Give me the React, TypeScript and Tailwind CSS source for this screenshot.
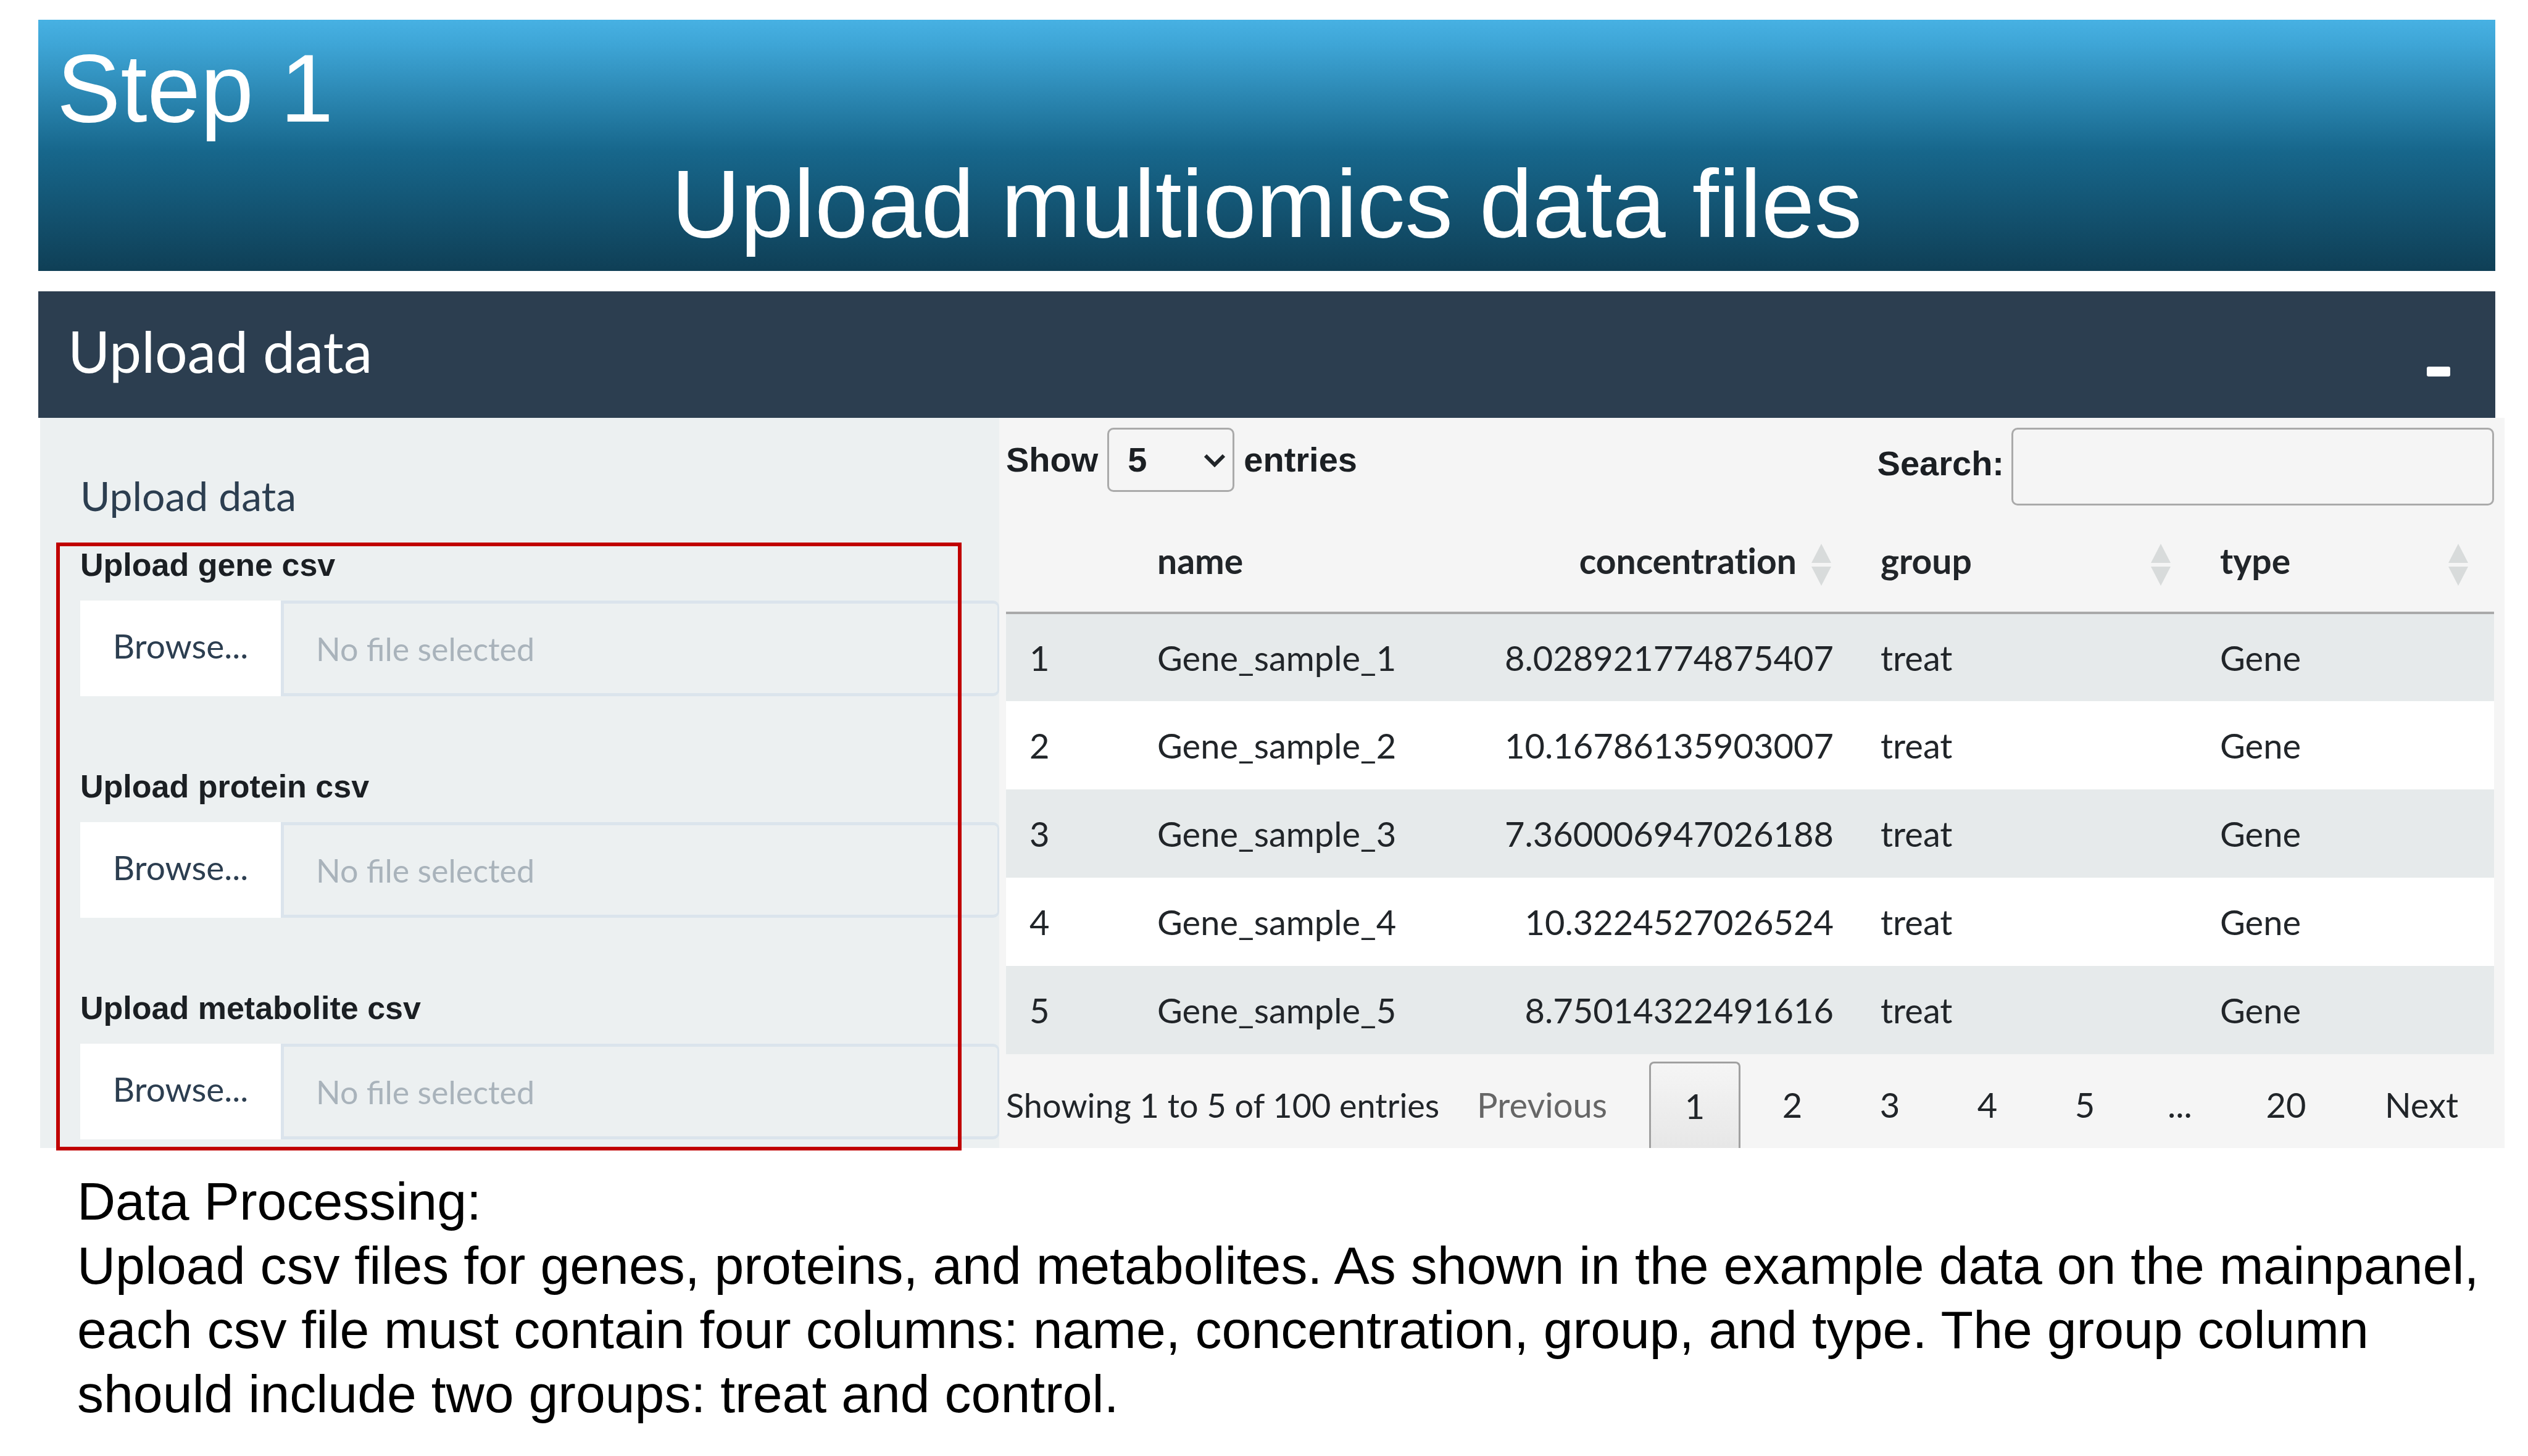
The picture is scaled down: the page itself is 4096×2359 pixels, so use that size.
import { useState } from "react";

const rows = [
  { id: 1, name: "Gene_sample_1", concentration: "8.028921774875407", group: "treat", type: "Gene" },
  { id: 2, name: "Gene_sample_2", concentration: "10.16786135903007", group: "treat", type: "Gene" },
  { id: 3, name: "Gene_sample_3", concentration: "7.360006947026188", group: "treat", type: "Gene" },
  { id: 4, name: "Gene_sample_4", concentration: "10.3224527026524", group: "treat", type: "Gene" },
  { id: 5, name: "Gene_sample_5", concentration: "8.75014322491616", group: "treat", type: "Gene" },
];

const uploads = [
  { id: "gene", label: "Upload gene csv" },
  { id: "protein", label: "Upload protein csv" },
  { id: "metabolite", label: "Upload metabolite csv" },
];

function SortIcon() {
  return (
    <svg viewBox="0 0 32 80" className="h-[80px] w-8 shrink-0" aria-hidden="true">
      <path d="M16 12L32 43H0Z M0 49H32L16 80Z" fill="#d8dbdb" />
    </svg>
  );
}

function UploadField({ id, label }: { id: string; label: string }) {
  return (
    <div>
      <label
        htmlFor={id}
        className="block font-['Liberation_Sans',sans-serif] text-[52px] leading-[60px] font-bold text-[#1b1f23]"
      >
        {label}
      </label>
      <div className="mt-7 flex h-[155px]">
        <button type="button" className="w-[325px] shrink-0 bg-white pb-2 text-center text-[55px] text-[#2c3e50]">
          Browse...
        </button>
        <input
          id={id}
          type="text"
          readOnly
          placeholder="No file selected"
          className="min-w-0 flex-1 rounded-r-[10px] border-[5px] border-r-[3px] border-[#dbe4ec] bg-transparent pl-[52px] text-[52px] placeholder:text-[#a9b3bb]"
        />
      </div>
    </div>
  );
}

function Sidebar() {
  return (
    <aside className="relative bg-[#ecf0f1] pt-[86px] pb-3 pl-[65px]">
      <h3 className="text-[66px] leading-[80px] text-[#2c3e50]">Upload data</h3>
      <div className="mt-[42px] flex flex-col gap-[116px]">
        {uploads.map((u) => (
          <UploadField key={u.id} id={u.id} label={u.label} />
        ))}
      </div>
      <div className="pointer-events-none absolute top-[202px] right-[61px] -bottom-1 left-[26px] border-[6px] border-[#c00000]" />
    </aside>
  );
}

function TableControls() {
  const [length, setLength] = useState("5");
  const [search, setSearch] = useState("");
  return (
    <div className="flex items-start justify-between font-['Liberation_Sans',sans-serif] text-[56px] font-bold text-[#1b1f23]">
      <div className="flex items-center gap-[15px]">
        <label htmlFor="length">Show</label>
        <div className="relative">
          <select
            id="length"
            value={length}
            onChange={(e) => setLength(e.target.value)}
            className="block h-[104px] w-[206px] appearance-none rounded-[10px] border-[3px] border-[#aaaaaa] bg-transparent pl-[30px]"
          >
            <option value="5">5</option>
            <option value="10">10</option>
            <option value="25">25</option>
          </select>
          <svg
            viewBox="0 0 34 22"
            className="pointer-events-none absolute top-[42px] right-[15px] h-[22px] w-[34px]"
            aria-hidden="true"
          >
            <path d="M2 3L17 18L32 3" fill="none" stroke="#212529" strokeWidth="6" />
          </svg>
        </div>
        <span>entries</span>
      </div>
      <div className="flex gap-3">
        <label htmlFor="search" className="leading-[116px]">
          Search:
        </label>
        <input
          id="search"
          type="search"
          value={search}
          onChange={(e) => setSearch(e.target.value)}
          className="h-[126px] w-[782px] rounded-[10px] border-[3px] border-[#aaaaaa] bg-transparent px-5 font-normal"
        />
      </div>
    </div>
  );
}

function DataTable() {
  return (
    <table className="mt-4 w-full table-fixed border-collapse text-left text-[56px] text-[#212529]">
      <colgroup>
        <col className="w-[207px]" />
        <col className="w-[583px]" />
        <col className="w-[589px]" />
        <col className="w-[550px]" />
        <col className="w-[482px]" />
      </colgroup>
      <thead className="text-[57px] [font-variant-ligatures:none]">
        <tr className="h-[158px] border-b-4 border-[#aaaaaa]">
          <th aria-label="row" />
          <th scope="col" className="p-0 pb-2 pl-[38px]">
            name
          </th>
          <th scope="col" className="p-0 pr-[42px] pb-2">
            <button type="button" className="flex w-full items-center justify-end gap-6 font-bold">
              concentration
              <SortIcon />
            </button>
          </th>
          <th scope="col" className="p-0 pr-[42px] pb-2 pl-[38px]">
            <button type="button" className="flex w-full items-center justify-between font-bold">
              group
              <SortIcon />
            </button>
          </th>
          <th scope="col" className="p-0 pr-[42px] pb-2 pl-[38px]">
            <button type="button" className="flex w-full items-center justify-between font-bold">
              type
              <SortIcon />
            </button>
          </th>
        </tr>
      </thead>
      <tbody>
        {rows.map((r) => (
          <tr key={r.id} className="h-[143px] odd:bg-[#e6eaeb] even:bg-white">
            <td className="p-0 pl-[38px]">{r.id}</td>
            <td className="p-0 pl-[38px]">{r.name}</td>
            <td className="p-0 pr-[38px] text-right">{r.concentration}</td>
            <td className="p-0 pl-[38px]">{r.group}</td>
            <td className="p-0 pl-[38px]">{r.type}</td>
          </tr>
        ))}
      </tbody>
    </table>
  );
}

function TableFooter() {
  return (
    <div className="mt-3 flex h-[140px] items-stretch justify-between whitespace-nowrap text-[#212529]">
      <p className="self-center text-[54px]">Showing 1 to 5 of 100 entries</p>
      <nav aria-label="Pagination" className="flex items-stretch gap-[10px] text-[56px]">
        <button type="button" disabled className="px-[58px] text-[#666666]">
          Previous
        </button>
        <button
          type="button"
          aria-current="page"
          className="w-[148px] rounded-t-[8px] border-[3px] border-b-0 border-[#a0a0a0] bg-linear-to-b from-[#f5f5f5] to-[#e7e7e7]"
        >
          1
        </button>
        <button type="button" className="w-[148px]">2</button>
        <button type="button" className="w-[148px]">3</button>
        <button type="button" className="w-[148px]">4</button>
        <button type="button" className="w-[148px]">5</button>
        <span className="flex w-[140px] items-center justify-center">...</span>
        <button type="button" className="w-[184px]">20</button>
        <button type="button" className="px-[58px]">Next</button>
      </nav>
    </div>
  );
}

export default function App() {
  return (
    <main className="min-h-screen bg-white pt-8 font-['Lato',sans-serif]">
      <header className="mr-[53px] ml-[62px] bg-[linear-gradient(to_bottom,#47b1e3_0%,#3ea5d6_10%,#17678c_52%,#0f3f56_100%)] px-[30px] pt-[18px] pb-[15px] font-['Liberation_Sans',sans-serif] text-[155px] leading-[187px] text-white">
        <p>Step 1</p>
        <h1 className="text-center">Upload multiomics data files</h1>
      </header>

      <section className="mt-[33px]">
        <div className="mr-[53px] ml-[62px] flex h-[205px] items-center justify-between bg-[#2c3e50] pr-[73px] pb-3 pl-12 text-white">
          <h2 className="text-[93px]">Upload data</h2>
          <button type="button" aria-label="Collapse" className="mb-[55px] self-end">
            <span className="block h-4 w-[38px] rounded-[3px] bg-white" />
          </button>
        </div>
        <div className="mr-[38px] ml-[65px] grid grid-cols-[1554fr_2439fr]">
          <Sidebar />
          <div className="flex flex-col bg-[#f5f5f5] pt-4 pr-[17px] pl-[11px]">
            <TableControls />
            <DataTable />
            <TableFooter />
          </div>
        </div>
      </section>

      <section className="mt-[34px] pl-[125px] font-['Liberation_Sans',sans-serif] text-[86px] leading-[104px] text-black">
        <h2>Data Processing:</h2>
        <p>
          Upload csv files for genes, proteins, and metabolites. As shown in the example data on the mainpanel,
          <br />
          each csv file must contain four columns: name, concentration, group, and type. The group column
          <br />
          should include two groups: treat and control.
        </p>
      </section>
    </main>
  );
}
